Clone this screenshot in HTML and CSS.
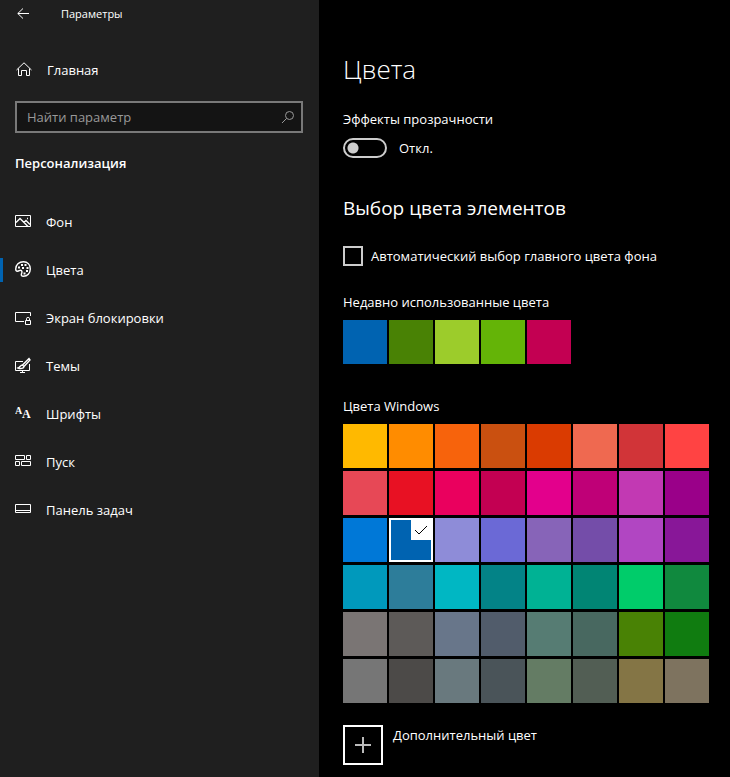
FILE: index.html
```html
<!DOCTYPE html>
<html lang="ru">
<head>
    <meta charset="UTF-8">
    <meta name="viewport" content="width=device-width, initial-scale=1.0">
    <title>Параметры</title>
    <link rel="stylesheet" href="styles.css">
</head>
<body>
    <aside class="sidebar">
        <header class="title-bar">
            <button class="back" type="button" aria-label="Назад">
                <svg width="14" height="12" viewBox="0 0 14 12"><path d="M6 .5L.8 5.500l5.200 5M.8 5.500H12"/></svg>
            </button>
            <span>Параметры</span>
        </header>
        <a class="home" href="#">
            <svg width="16" height="16" viewBox="0 0 16 16"><path d="M.5 8L8 .8 15.500 8M2.500 6.500v7h3v-5h5v5h3v-7"/></svg>
            <span>Главная</span>
        </a>
        <form class="search">
            <input type="text" placeholder="Найти параметр" aria-label="Найти параметр">
            <button type="button" aria-label="Поиск">
                <svg width="14" height="14" viewBox="0 0 14 14"><circle cx="8.500" cy="5.500" r="4"/><path d="M5.500 8.500L1 13"/></svg>
            </button>
        </form>
        <h2>Персонализация</h2>
        <nav class="menu">
            <a href="#">
                <svg width="16" height="16" viewBox="0 0 16 16"><path d="M.5 2.500h15v11H.5z"/><path class="bold" d="M1 9.500l4-4 8 8M9 9.500l2-2 4 4M12 5.500h1"/></svg>
                <span>Фон</span>
            </a>
            <a href="#" class="active">
                <svg width="16" height="16" viewBox="0 0 16 16"><path class="bold" d="M8.500.7c4 0 6.800 3 6.800 7.300s-3 7.300-6.800 7.300c-2 0-2.500-1-2-2.500.8-2 .5-3.500-1-3.500-1 0-1.500 1-3 1S.7 9.500.7 8C.7 4 4 .7 8.500.7z"/><path class="dots" d="M3 5.500h2v2H3zM6 3h2v2H6zM9.500 3h2v2h-2zM11.500 6h2v2h-2zM11 9h2v2h-2zM8.500 11.500h2v2h-2zM7 6h2v2H7z"/></svg>
                <span>Цвета</span>
            </a>
            <a href="#">
                <svg width="16" height="16" viewBox="0 0 16 16"><path d="M9 12.500H.5v-9h15V7M10.500 11.500h5v4h-5zM11.500 11.500v-2q0-1 1.500-1t1.500 1v2"/></svg>
                <span>Экран блокировки</span>
            </a>
            <a href="#">
                <svg width="16" height="16" viewBox="0 0 16 16"><path d="M8 4.500H.5v9h14V7M7.500 13.500v2M5 15.500h5"/><path class="bold" d="M14 1.500L7.500 8 9 9.500 15 3zM7.500 8C5.500 8 5 10 3 11c2.500 1 6 .5 6-1.500"/></svg>
                <span>Темы</span>
            </a>
            <a href="#">
                <svg class="letters" width="16" height="16" viewBox="0 0 16 16" aria-hidden="true"><text class="small" x="0" y="9">A</text><text x="7" y="13">A</text></svg>
                <span>Шрифты</span>
            </a>
            <a href="#">
                <svg width="16" height="16" viewBox="0 0 16 16"><path d="M.5 2.500h9v4h-9zM11.500 2.500h4v4h-4zM.5 8.500h4v4h-4zM6.500 8.500h9v4h-9z"/></svg>
                <span>Пуск</span>
            </a>
            <a href="#">
                <svg width="16" height="16" viewBox="0 0 16 16"><path d="M.5 3.500h15v8H.5zM.5 9.500h15"/></svg>
                <span>Панель задач</span>
            </a>
        </nav>
    </aside>

    <main class="content">
        <h1>Цвета</h1>
        <label class="label" for="transparency">Эффекты прозрачности</label>
        <div class="toggle">
            <input type="checkbox" id="transparency">
            <span id="toggleState">Откл.</span>
        </div>

        <h2>Выбор цвета элементов</h2>
        <label class="check">
            <input type="checkbox">
            <span>Автоматический выбор главного цвета фона</span>
        </label>

        <h3>Недавно использованные цвета</h3>
        <div class="swatches recent" id="recent"></div>

        <h3>Цвета Windows</h3>
        <div class="swatches" id="palette"></div>

        <div class="custom">
            <button type="button" id="addColor">
                <svg width="16" height="16" viewBox="0 0 16 16"><path d="M8 0v16M0 8h16"/></svg>
            </button>
            <label for="addColor">Дополнительный цвет</label>
        </div>
    </main>

    <script>
        const recentColors = ['#0063b1', '#498205', '#9ccc2b', '#64b407', '#c30052'];
        const windowsColors = [
            '#ffb900', '#ff8c00', '#f7630c', '#ca5010', '#da3b01', '#ef6950', '#d13438', '#ff4343',
            '#e74856', '#e81123', '#ea005e', '#c30052', '#e3008c', '#bf0077', '#c239b3', '#9a0089',
            '#0078d7', '#0063b1', '#8e8cd8', '#6b69d6', '#8764b8', '#744da9', '#b146c2', '#881798',
            '#0099bc', '#2d7d9a', '#00b7c3', '#038387', '#00b294', '#018574', '#00cc6a', '#10893e',
            '#7a7574', '#5d5a58', '#68768a', '#515c6b', '#567c73', '#486860', '#498205', '#107c10',
            '#767676', '#4c4a48', '#69797e', '#4a5459', '#647c64', '#525e54', '#847545', '#7e735f'
        ];
        const checkMark = '<span class="mark"><svg width="14" height="10" viewBox="0 0 14 10"><path d="M1 5l4 4 8-8"/></svg></span>';
        const palette = document.getElementById('palette');

        // Fill a container with color buttons
        function addSwatches(container, colors) {
            colors.forEach(color => {
                const button = document.createElement('button');
                button.type = 'button';
                button.style.background = color;
                button.setAttribute('aria-label', color);
                container.appendChild(button);
            });
        }

        // Mark one color of the palette as selected
        function selectSwatch(button) {
            const current = palette.querySelector('.selected');
            if (current) {
                current.classList.remove('selected');
                current.innerHTML = '';
            }
            button.classList.add('selected');
            button.innerHTML = checkMark;
        }

        addSwatches(document.getElementById('recent'), recentColors);
        addSwatches(palette, windowsColors);
        selectSwatch(palette.children[17]);

        palette.addEventListener('click', event => {
            const button = event.target.closest('button');
            if (button) {
                selectSwatch(button);
            }
        });

        document.getElementById('transparency').addEventListener('change', event => {
            document.getElementById('toggleState').textContent = event.target.checked ? 'Вкл.' : 'Откл.';
        });
    </script>
</body>
</html>
```
FILE: styles.css
```css
* {
    box-sizing: border-box;
}

body {
    margin: 0;
    display: flex;
    min-height: 100vh;
    background: #000;
    color: #fff;
    font-family: 'Open Sans', 'Noto Sans', sans-serif;
    font-size: 13px;
    line-height: 20px;
}

h1, h2, h3 {
    margin: 0;
}

a {
    color: inherit;
    text-decoration: none;
}

button, input {
    font: inherit;
    color: inherit;
    margin: 0;
    padding: 0;
    border: none;
    background: none;
}

svg {
    display: block;
    flex: none;
    fill: none;
    stroke: #fff;
}

/* Sidebar */
.sidebar {
    flex: 0 0 319px;
    background: #1f1f1f;
}

.title-bar {
    display: flex;
    align-items: center;
    gap: 30px;
    height: 28px;
    padding-left: 17px;
    font-size: 11px;
}

.home {
    display: flex;
    align-items: center;
    gap: 15px;
    height: 40px;
    margin-top: 22px;
    padding-left: 16px;
}

.search {
    display: flex;
    align-items: center;
    height: 32px;
    margin: 11px 16px 0 15px;
    padding: 0 6px 0 10px;
    border: 2px solid #797979;
    background: #141414;
}

.search input {
    flex: 1;
    min-width: 0;
    outline: none;
}

.search input::placeholder {
    color: #999;
    opacity: 1;
}

.search svg {
    stroke: #999;
}

.sidebar h2 {
    margin: 20px 0 0 15px;
    font-size: 13px;
    font-weight: 600;
}

.menu {
    margin-top: 25px;
}

.menu a {
    display: flex;
    align-items: center;
    gap: 15px;
    height: 48px;
    padding-left: 15px;
}

.menu svg {
    margin-bottom: 2px;
}

/* Accent bar of the open section */
.menu .active {
    background: linear-gradient(#0063b1, #0063b1) left center / 3px 24px no-repeat;
}

.menu .bold {
    stroke-width: 1.4;
}

.menu .dots {
    fill: #fff;
    stroke: none;
}

.menu .letters {
    fill: #fff;
    stroke: none;
    font-family: 'Liberation Serif', serif;
    font-size: 12px;
    font-weight: 700;
}

.menu .small {
    font-size: 10px;
}

/* Content */
.content {
    flex: 1;
    min-width: 0;
    padding: 49px 16px 12px 24px;
}

.content h1 {
    font-size: 26px;
    font-weight: 300;
    line-height: 40px;
}

.label {
    display: block;
    margin-top: 20px;
}

.toggle {
    display: flex;
    align-items: center;
    gap: 12px;
    margin-top: 9px;
}

.toggle input {
    appearance: none;
    width: 44px;
    height: 20px;
    border: 2px solid #ccc;
    border-radius: 10px;
    background: radial-gradient(circle at 8px 8px, #ccc 5px, transparent 6px);
}

.toggle input:checked {
    border-color: #0063b1;
    background: radial-gradient(circle at 32px 8px, #fff 5px, #0063b1 6px);
}

.content h2 {
    margin-top: 35px;
    font-size: 19px;
    font-weight: 400;
    line-height: 30px;
}

.check {
    display: flex;
    align-items: center;
    gap: 8px;
    margin-top: 23px;
}

.check input {
    appearance: none;
    width: 20px;
    height: 20px;
    border: 2px solid #ccc;
}

.check input:checked {
    background: #0063b1;
}

.content h3 {
    margin-top: 26px;
    font-size: 13px;
    font-weight: 400;
}

.swatches {
    display: grid;
    grid-template-columns: repeat(auto-fill, 44px);
    gap: 3px 2px;
    margin-top: 8px;
}

.recent {
    margin-bottom: 32px;
}

.swatches button {
    height: 44px;
}

.swatches .selected {
    display: flex;
    justify-content: flex-end;
    align-items: flex-start;
    border: 2px solid #fff;
}

.mark {
    display: flex;
    align-items: center;
    justify-content: center;
    width: 20px;
    height: 20px;
    background: #fff;
}

.mark svg {
    stroke: #000;
}

.custom {
    display: flex;
    gap: 10px;
    margin-top: 22px;
}

.custom button {
    display: flex;
    align-items: center;
    justify-content: center;
    width: 40px;
    height: 40px;
    border: 2px solid #fff;
}

.custom svg {
    stroke: #bbb;
    stroke-width: 2;
}
```
